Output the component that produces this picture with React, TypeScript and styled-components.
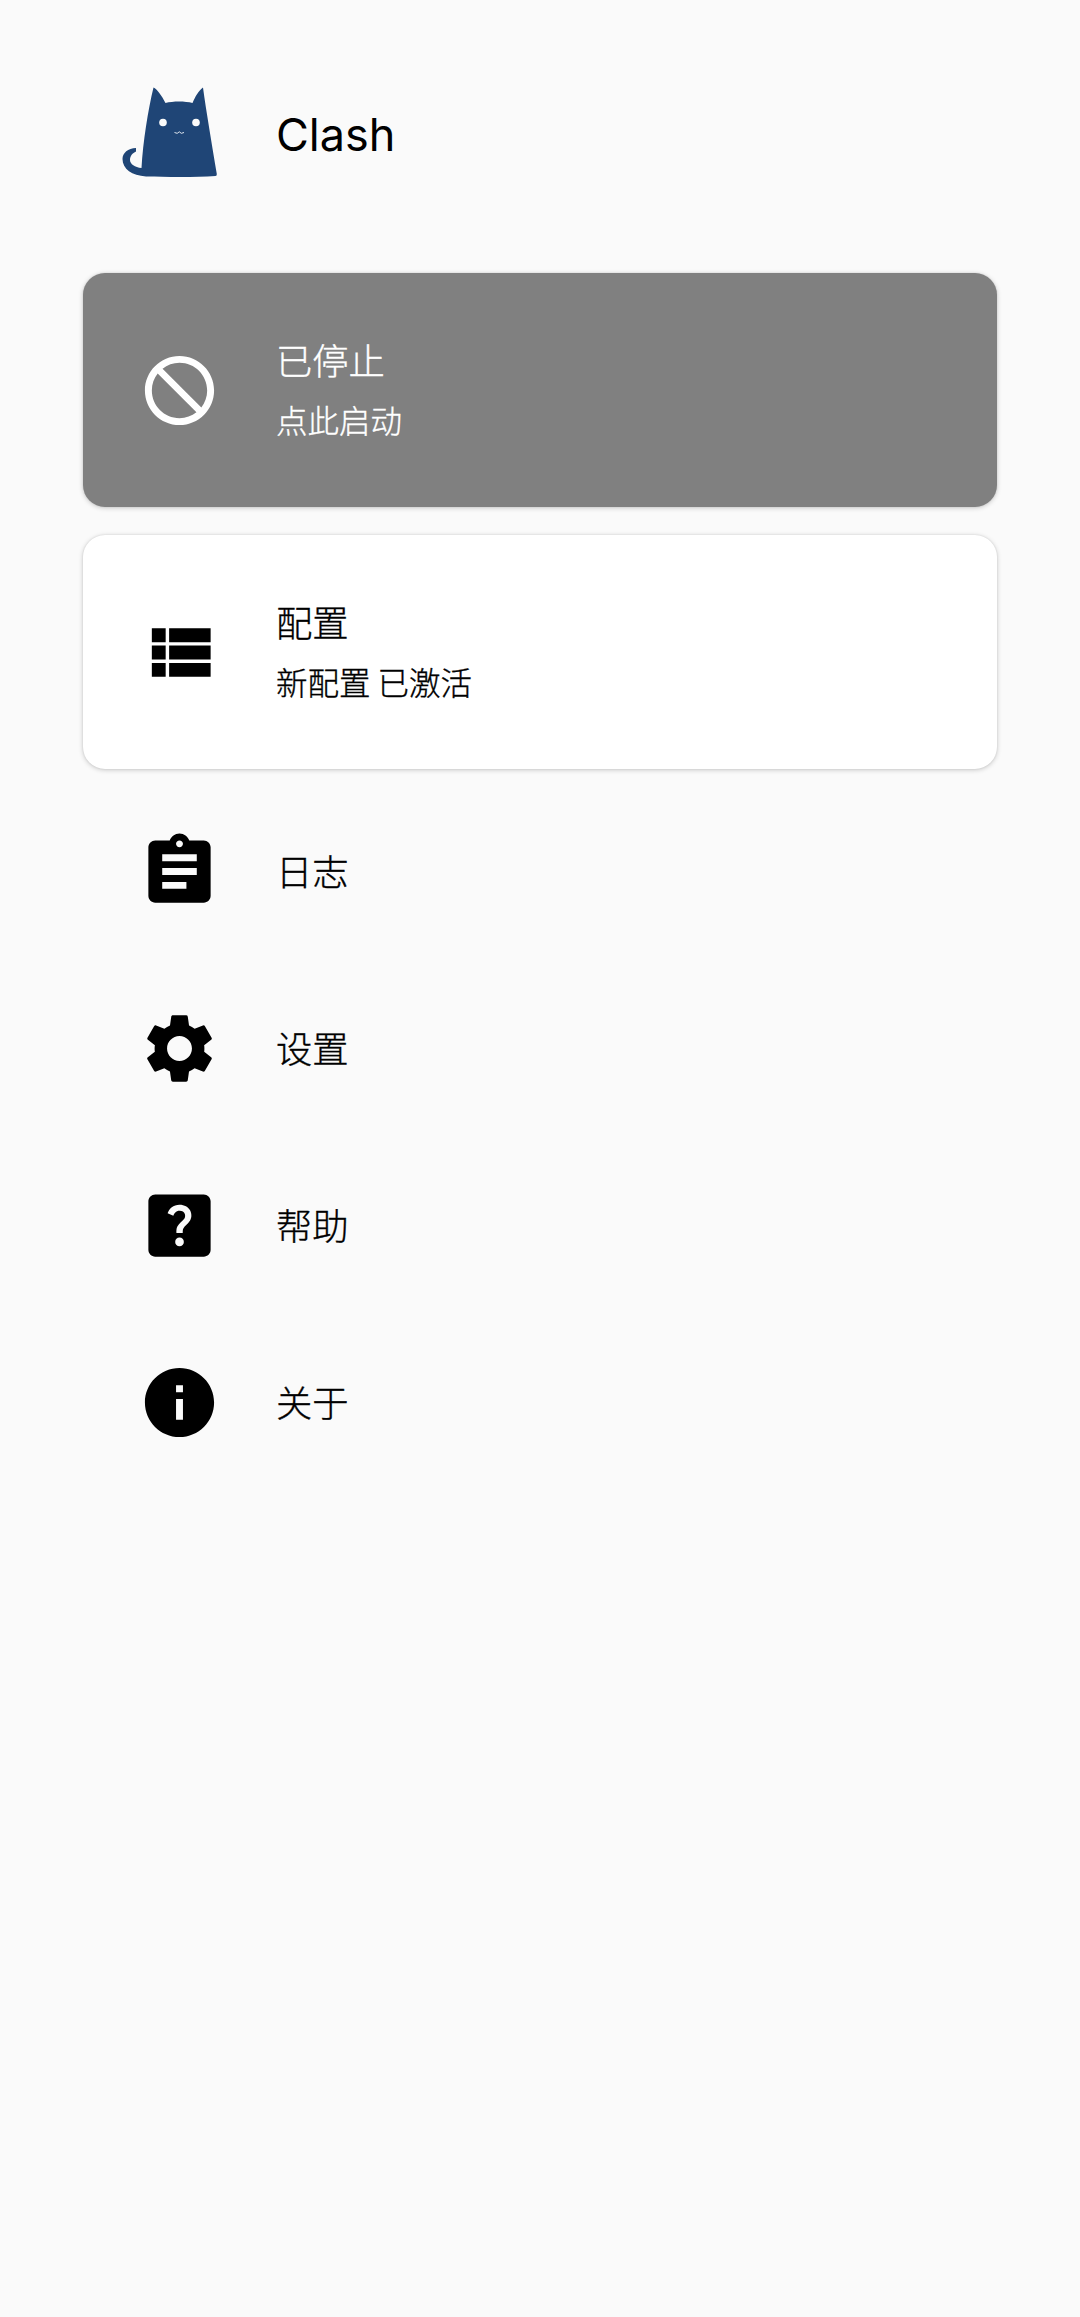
import React from "react";
import styled, { createGlobalStyle } from "styled-components";
import { MdAssignment, MdSettings, MdHelpCenter, MdInfo } from "react-icons/md";

const Global = createGlobalStyle`
  html, body { margin: 0; padding: 0; background: #fafafa; }
  body { font-family: "Noto Sans CJK SC", "Noto Sans", sans-serif; color: #000; }
`;

const Page = styled.div`
  width: 1080px;
  height: 2317px;
  box-sizing: border-box;
  padding: 75px 83px 0;
  background: #fafafa;
`;

const Header = styled.header`
  display: flex;
  align-items: center;
  height: 120px;
  margin-bottom: 78px;
  padding-left: 27px;
  gap: 46px;
`;

const Logo = styled.svg`
  width: 120px;
  height: 120px;
  flex: none;
`;

const Brand = styled.span`
  font-family: Inter, "Noto Sans", sans-serif;
  font-weight: 400;
  font-size: 45px;
  line-height: 62px;
`;

const Cards = styled.div`
  display: flex;
  flex-direction: column;
  gap: 28px;
`;

const Card = styled.div<{ $stopped?: boolean }>`
  display: flex;
  align-items: center;
  height: 234px;
  padding: 0 55px;
  gap: 55px;
  border-radius: 22px;
  background: ${(p) => (p.$stopped ? "#808080" : "#ffffff")};
  color: ${(p) => (p.$stopped ? "#ffffff" : "#000000")};
  box-shadow: 0 1px 5px rgba(0, 0, 0, 0.2), 0 0 2px rgba(0, 0, 0, 0.1);
`;

const IconSlot = styled.span`
  display: flex;
  flex: none;
  width: 83px;
  height: 83px;
  font-size: 83px;
`;

const GlyphSvg = styled.svg`
  width: 83px;
  height: 83px;
  fill: currentColor;
`;

const TextStack = styled.div`
  display: flex;
  flex-direction: column;
`;

const Title = styled.div`
  font-size: 36.3px;
  font-weight: 300;
  line-height: 58px;
  -webkit-text-stroke: 0.35px currentColor;
`;

const Subtitle = styled.div`
  font-size: 31.5px;
  font-weight: 300;
  line-height: 62px;
  -webkit-text-stroke: 0.35px currentColor;
`;

const Menu = styled.nav`
  display: flex;
  flex-direction: column;
  margin-top: 14px;
`;

const Row = styled.div`
  display: flex;
  align-items: center;
  height: 177px;
  padding: 0 55px;
  gap: 55px;
`;

const RowLabel = styled(Title)`
  padding-bottom: 3px;
`;

const BlockIcon = () => (
  <GlyphSvg viewBox="0 0 24 24" aria-hidden="true">
    <path d="M12 2C6.48 2 2 6.48 2 12s4.48 10 10 10 10-4.48 10-10S17.52 2 12 2zm0 18c-4.42 0-8-3.58-8-8 0-1.85.63-3.55 1.69-4.9L16.9 18.31C15.55 19.37 13.85 20 12 20zm6.31-3.1L7.1 5.69C8.45 4.63 10.15 4 12 4c4.42 0 8 3.58 8 8 0 1.85-.63 3.55-1.69 4.9z" />
  </GlyphSvg>
);

const ListIcon = () => (
  <GlyphSvg viewBox="0 0 24 24" aria-hidden="true">
    <path d="M4 14h4v-4H4v4zm0 5h4v-4H4v4zM4 9h4V5H4v4zm5 5h12v-4H9v4zm0 5h12v-4H9v4zM9 5v4h12V5H9z" />
  </GlyphSvg>
);

const menu = [
  { icon: <MdAssignment />, label: "日志" },
  { icon: <MdSettings />, label: "设置" },
  { icon: <MdHelpCenter />, label: "帮助" },
  { icon: <MdInfo />, label: "关于" },
];

export default function App() {
  return (
    <Page>
      <Global />
      <Header>
        <Logo viewBox="0 5 120 120" aria-hidden="true">
          <path
            fill="#1f4576"
            d="M43.5 17.5 C47 19 52 26 55.5 33 C63 31 75 31 82.5 33 C85 27 89 20 93 17.5 C96 40 102 75 106.8 104 Q107 106 105.5 106 C85 107.5 55 107 36 106.5 C22 105.5 12.5 99 12.5 89 C12.5 83 18 78 26 78 L26 81.5 C22.5 83 20 86 20 90 C20 94 25 97.5 31.5 98 C33 72 38 40 43.5 17.5 Z"
          />
          <circle cx="53" cy="52.5" r="3.8" fill="#fafafa" />
          <circle cx="86" cy="52.5" r="3.8" fill="#fafafa" />
          <path
            d="M64.5 62.5 Q67.5 64.5 69.3 61.8 Q71 64.5 74 62.5"
            fill="none"
            stroke="#dfe6ee"
            strokeWidth="1"
          />
        </Logo>
        <Brand>Clash</Brand>
      </Header>
      <Cards>
        <Card $stopped>
          <IconSlot><BlockIcon /></IconSlot>
          <TextStack>
            <Title>已停止</Title>
            <Subtitle>点此启动</Subtitle>
          </TextStack>
        </Card>
        <Card>
          <IconSlot><ListIcon /></IconSlot>
          <TextStack>
            <Title>配置</Title>
            <Subtitle>新配置 已激活</Subtitle>
          </TextStack>
        </Card>
      </Cards>
      <Menu>
        {menu.map((m) => (
          <Row key={m.label}>
            <IconSlot>{m.icon}</IconSlot>
            <RowLabel>{m.label}</RowLabel>
          </Row>
        ))}
      </Menu>
    </Page>
  );
}
